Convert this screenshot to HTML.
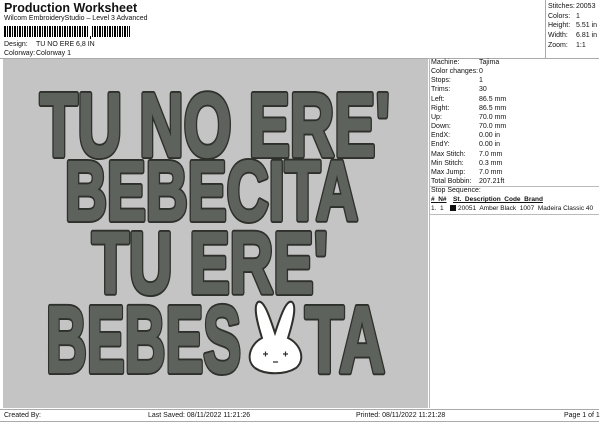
<!DOCTYPE html>
<html><head><style>
body{margin:0;width:600px;height:424px;background:#fff;font-family:"Liberation Sans",sans-serif;color:#111;position:relative;overflow:hidden}
.a{position:absolute;white-space:nowrap}
.s{font-size:7px}
</style></head><body>
<div class="a" style="left:0;top:0;width:599px;height:58px;border-bottom:1px solid #aaa"></div>
<div class="a" style="left:4px;top:1px;font-size:12.5px;font-weight:bold">Production Worksheet</div>
<div class="a s" style="left:4px;top:15px">Wilcom EmbroideryStudio – Level 3 Advanced</div>
<div class="a" style="left:4px;top:26px;width:126px;height:11px;background:repeating-linear-gradient(90deg,#000 0 2px,#fff 2px 3px,#000 3px 4px,#fff 4px 5px)"></div>
<div class="a" style="left:88px;top:26px;width:4px;height:12px;background:#fff"></div>
<div class="a" style="left:90px;top:36px;width:1px;height:3px;background:#000"></div>
<div class="a s" style="left:4px;top:41px">Design:</div><div class="a s" style="left:36px;top:41px">TU NO ERE 6,8 IN</div>
<div class="a s" style="left:4px;top:50px">Colorway:</div><div class="a s" style="left:36px;top:50px">Colorway 1</div>
<div class="a" style="left:545px;top:0;width:1px;height:58px;background:#aaa"></div>
<div class="a s" style="left:548px;top:2px;line-height:9.7px">Stitches:<br>Colors:<br>Height:<br>Width:<br>Zoom:</div>
<div class="a s" style="left:576px;top:2px;line-height:9.7px">20053<br>1<br>5.51 in<br>6.81 in<br>1:1</div>
<div class="a" style="left:3px;top:59px;width:425px;height:349px;background:#c4c4c4"></div>
<svg class="a" style="left:3px;top:59px" width="425" height="349" viewBox="3 59 425 349">
<defs>
<g id="t" font-family="Liberation Sans" font-weight="bold">
<g transform="translate(0,156) scale(1,1.5)"><text x="40" y="0" font-size="60" textLength="350" lengthAdjust="spacingAndGlyphs">TU NO ERE'</text></g>
<g transform="translate(0,220) scale(1,1.5)"><text x="65" y="0" font-size="56" textLength="293" lengthAdjust="spacingAndGlyphs">BEBECITA</text></g>
<g transform="translate(0,293) scale(1,1.5)"><text x="92" y="0" font-size="58" textLength="236" lengthAdjust="spacingAndGlyphs">TU ERE'</text></g>
<g transform="translate(0,372) scale(1,1.5)"><text x="46" y="0" font-size="63" textLength="195" lengthAdjust="spacingAndGlyphs">BEBES</text>
<text x="305" y="0" font-size="63" textLength="80" lengthAdjust="spacingAndGlyphs">TA</text></g>
</g>
</defs>
<use href="#t" fill="#2e302c" stroke="#2e302c" stroke-width="4" stroke-linejoin="round"/>
<use href="#t" fill="#5e625c" stroke="#5e625c" stroke-width="1.5" stroke-linejoin="round"/>
<path d="M262 338 C257 322 253 306 258 302 C264 299 270 318 275 333 C280 318 286 299 292 302 C297 306 293 322 288 338 C301 344 306 360 296 368 C285 375 265 375 255 368 C245 360 250 344 262 338Z" fill="#fff" stroke="#2e302c" stroke-width="2"/>
<g stroke="#2e302c" stroke-width="1.2" fill="none"><path d="M263 354h5M265.5 351.5v5M283 354h5M285.5 351.5v5M273 362h5"/></g>
</svg>
<div class="a" style="left:429px;top:58px;width:170px;height:350px;border-left:1px solid #bbb"></div>
<div class="a s" style="left:431px;top:58px;line-height:9.15px">Machine:<br>Color changes:<br>Stops:<br>Trims:<br>Left:<br>Right:<br>Up:<br>Down:<br>EndX:<br>EndY:<br>Max Stitch:<br>Min Stitch:<br>Max Jump:<br>Total Bobbin:</div>
<div class="a s" style="left:479px;top:58px;line-height:9.15px">Tajima<br>0<br>1<br>30<br>86.5 mm<br>86.5 mm<br>70.0 mm<br>70.0 mm<br>0.00 in<br>0.00 in<br>7.0 mm<br>0.3 mm<br>7.0 mm<br>207.21ft</div>
<div class="a" style="left:429px;top:186px;width:170px;height:1px;background:#bbb"></div>
<div class="a s" style="left:431px;top:187px">Stop Sequence:</div>
<div class="a" style="left:431px;top:196px;font-size:6.5px;font-weight:bold;text-decoration:underline">#&nbsp; N#</div>
<div class="a" style="left:453px;top:196px;font-size:6.5px;font-weight:bold;text-decoration:underline">St.&nbsp; Description&nbsp; Code&nbsp; Brand</div>
<div class="a" style="left:431px;top:205px;font-size:6.5px">1.&nbsp; 1</div>
<div class="a" style="left:450px;top:205px;width:6px;height:6px;background:#111"></div>
<div class="a" style="left:458px;top:205px;font-size:6.5px">20051&nbsp; Amber Black&nbsp; 1007&nbsp; Madeira Classic 40</div>
<div class="a" style="left:429px;top:214px;width:170px;height:1px;background:#bbb"></div>
<div class="a" style="left:0;top:409px;width:599px;height:1px;background:#aaa"></div>
<div class="a" style="left:0;top:421px;width:599px;height:1px;background:#aaa"></div>
<div class="a s" style="left:4px;top:412px">Created By:</div>
<div class="a s" style="left:148px;top:412px">Last Saved: 08/11/2022 11:21:26</div>
<div class="a s" style="left:356px;top:412px">Printed: 08/11/2022 11:21:28</div>
<div class="a s" style="left:564px;top:412px">Page 1 of 1</div>
</body></html>
